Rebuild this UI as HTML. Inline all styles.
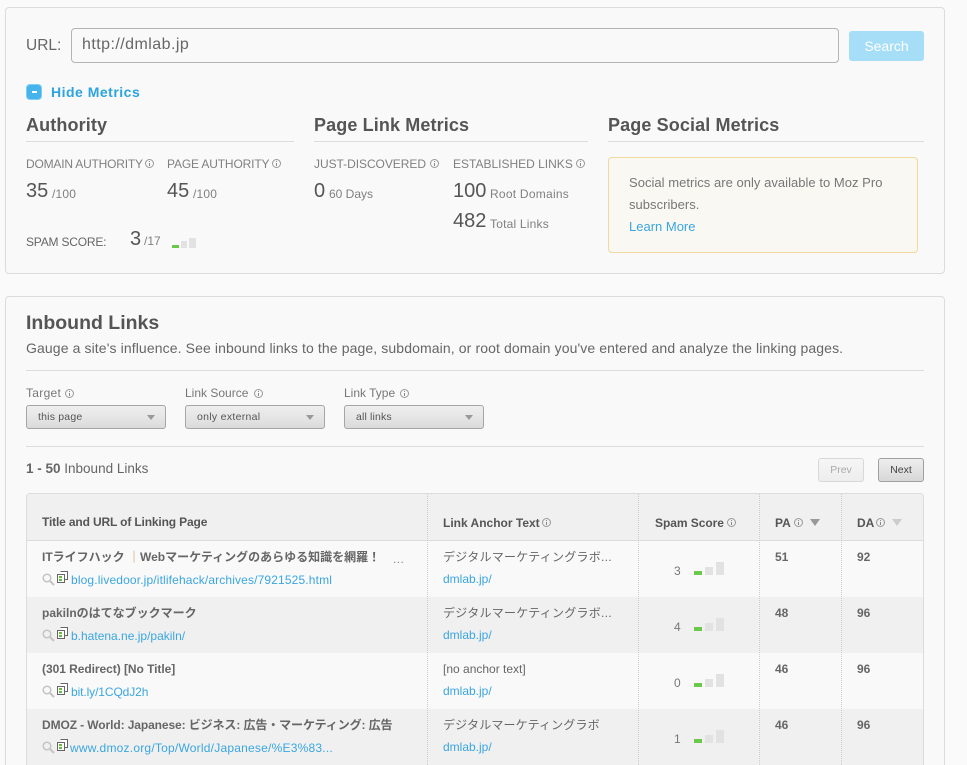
<!DOCTYPE html>
<html><head><meta charset="utf-8"><title>Open Site Explorer</title>
<style>
html,body{margin:0;padding:0;width:967px;height:765px;overflow:hidden;background:#fafafa}
body{position:relative;font-family:"Liberation Sans","Noto Sans CJK JP",sans-serif;color:#666}
.a,.t{position:absolute}
.t{white-space:nowrap;line-height:16px}
.panel{position:absolute;box-sizing:border-box;background:#f9f9f9;border:1px solid #dcdcdc;border-radius:4px}
.hr{position:absolute;height:1px;background:#dcdcdc}
h2{position:absolute;margin:0;font-size:18px;line-height:22px;font-weight:bold;color:#555;white-space:nowrap;letter-spacing:.12px}
.lab{font-size:12px;color:#808080}
.num{font-size:20px;color:#555;line-height:24px}
.sm{font-size:12px;color:#808080}
.link{color:#3aa6e0}
.sel{position:absolute;box-sizing:border-box;width:140px;height:24px;top:405px;border:1px solid #a6a6a6;border-radius:3px;background:linear-gradient(#eee,#e6e6e6 50%,#dadada);font-size:10.5px;letter-spacing:.3px;line-height:23px;padding-left:11px;color:#555}
.sel:after{content:"";position:absolute;right:10px;top:9px;border-left:4.5px solid transparent;border-right:4.5px solid transparent;border-top:5px solid #999}
.btn{position:absolute;box-sizing:border-box;top:458px;height:24px;border-radius:3px;font-size:10.5px;line-height:22px;text-align:center}
.th{font-size:12px;font-weight:bold;color:#555}
.title{font-size:12px;font-weight:bold;color:#666}
.url{font-size:12px;color:#3aa6e0;letter-spacing:.14px}
.anc{font-size:12px;color:#666}
.v{position:absolute;top:494px;width:0;height:271px;border-left:1px dotted #ccc}
.row{position:absolute;left:27px;width:896px;height:56px}
.num2{font-size:12px;font-weight:bold;color:#666}
.ar{position:absolute;border-left:5px solid transparent;border-right:5px solid transparent;border-top:7px solid #999}
svg{position:absolute;overflow:visible}
</style></head><body>

<div class="panel" style="left:5px;top:7px;width:940px;height:267px"></div>
<div class="t" style="left:26px;top:37px;font-size:15.5px;line-height:18px;color:#666">URL:</div>
<div class="a" style="left:71px;top:28px;width:768px;height:35px;box-sizing:border-box;border:1px solid #b4b4b4;border-radius:4px;background:#f9f9f9"></div>
<div class="t" style="left:82px;top:36px;font-size:16px;line-height:18px;letter-spacing:.45px;color:#666">http://dmlab.jp</div>
<div class="a" style="left:849px;top:31px;width:75px;height:30px;background:#a6def7;border-radius:3px;color:#fff;font-size:14px;line-height:30px;text-align:center">Search</div>

<div class="a" style="left:26px;top:84px;width:16px;height:16px;box-sizing:border-box;background:#45b4ea;border:1px solid #7fcdf2;border-radius:4px"></div>
<div class="a" style="left:32px;top:91px;width:5px;height:2px;background:#fff"></div>
<div class="t" style="left:51px;top:84px;font-size:14px;font-weight:bold;letter-spacing:.5px;color:#2ba4e0">Hide Metrics</div>

<h2 style="left:26px;top:114px">Authority</h2><div class="hr" style="left:26px;top:141px;width:268px"></div>
<h2 style="left:314px;top:114px">Page Link Metrics</h2><div class="hr" style="left:314px;top:141px;width:274px"></div>
<h2 style="left:608px;top:114px">Page Social Metrics</h2><div class="hr" style="left:608px;top:141px;width:316px"></div>

<div class="t lab" style="left:26px;top:156px;letter-spacing:-.2px">DOMAIN AUTHORITY</div>
<svg style="left:145px;top:159px" width="9" height="9"><circle cx="4.5" cy="4.5" r="4" fill="none" stroke="#999"/><path d="M4.5 2v1M4.5 4v3" stroke="#888"/></svg>
<div class="t lab" style="left:167px;top:156px;letter-spacing:-.15px">PAGE AUTHORITY</div>
<svg style="left:272px;top:159px" width="9" height="9"><circle cx="4.5" cy="4.5" r="4" fill="none" stroke="#999"/><path d="M4.5 2v1M4.5 4v3" stroke="#888"/></svg>
<div class="t num" style="left:26px;top:179px">35</div><div class="t sm" style="left:52px;top:186px;letter-spacing:.2px">/100</div>
<div class="t num" style="left:167px;top:179px">45</div><div class="t sm" style="left:193px;top:186px;letter-spacing:.2px">/100</div>
<div class="t lab" style="left:26px;top:234px;color:#666;letter-spacing:-.2px">SPAM SCORE:</div>
<div class="t num" style="left:130px;top:227px">3</div><div class="t sm" style="left:144px;top:233px">/17</div>
<div class="a" style="left:172px;top:245px;width:7px;height:3px;background:#6cc84a"></div>
<div class="a" style="left:181px;top:241px;width:6px;height:7px;background:#e2e2e2"></div>
<div class="a" style="left:189px;top:238px;width:7px;height:10px;background:#e2e2e2"></div>

<div class="t lab" style="left:314px;top:156px;letter-spacing:-.05px">JUST-DISCOVERED</div>
<svg style="left:430px;top:159px" width="9" height="9"><circle cx="4.5" cy="4.5" r="4" fill="none" stroke="#999"/><path d="M4.5 2v1M4.5 4v3" stroke="#888"/></svg>
<div class="t lab" style="left:453px;top:156px">ESTABLISHED LINKS</div>
<svg style="left:576px;top:159px" width="9" height="9"><circle cx="4.5" cy="4.5" r="4" fill="none" stroke="#999"/><path d="M4.5 2v1M4.5 4v3" stroke="#888"/></svg>
<div class="t num" style="left:314px;top:179px">0</div><div class="t sm" style="left:329px;top:186px">60 Days</div>
<div class="t num" style="left:453px;top:179px">100</div><div class="t sm" style="left:490px;top:186px;letter-spacing:.25px">Root Domains</div>
<div class="t num" style="left:453px;top:209px">482</div><div class="t sm" style="left:490px;top:216px;letter-spacing:.2px">Total Links</div>

<div class="a" style="left:608px;top:157px;width:310px;height:96px;box-sizing:border-box;background:#f9f8f2;border:1px solid #f1d99e;border-radius:4px"></div>
<div class="t" style="left:629px;top:175px;font-size:13px;letter-spacing:.03px;color:#777">Social metrics are only available to Moz Pro</div>
<div class="t" style="left:629px;top:197px;font-size:13px;letter-spacing:.03px;color:#777">subscribers.</div>
<div class="t link" style="left:629px;top:219px;font-size:13px">Learn More</div>

<div class="panel" style="left:5px;top:296px;width:940px;height:490px"></div>
<h2 style="left:26px;top:312px;font-size:19.5px;letter-spacing:0">Inbound Links</h2>
<div class="t" style="left:26px;top:340px;font-size:14px;letter-spacing:.11px;color:#666">Gauge a site's influence. See inbound links to the page, subdomain, or root domain you've entered and analyze the linking pages.</div>
<div class="hr" style="left:26px;top:370px;width:898px"></div>

<div class="t" style="left:26px;top:385px;font-size:12px;letter-spacing:.3px;color:#777">Target</div>
<svg style="left:65px;top:389px" width="9" height="9"><circle cx="4.5" cy="4.5" r="4" fill="none" stroke="#999"/><path d="M4.5 2v1M4.5 4v3" stroke="#888"/></svg>
<div class="t" style="left:185px;top:385px;font-size:12px;color:#777">Link Source</div>
<svg style="left:254px;top:389px" width="9" height="9"><circle cx="4.5" cy="4.5" r="4" fill="none" stroke="#999"/><path d="M4.5 2v1M4.5 4v3" stroke="#888"/></svg>
<div class="t" style="left:344px;top:385px;font-size:12px;color:#777">Link Type</div>
<svg style="left:400px;top:389px" width="9" height="9"><circle cx="4.5" cy="4.5" r="4" fill="none" stroke="#999"/><path d="M4.5 2v1M4.5 4v3" stroke="#888"/></svg>
<div class="sel" style="left:26px;letter-spacing:.2px">this page</div>
<div class="sel" style="left:185px">only external</div>
<div class="sel" style="left:344px;letter-spacing:.15px">all links</div>
<div class="hr" style="left:26px;top:446px;width:898px"></div>

<div class="t" style="left:26px;top:461px;font-size:13.5px;color:#666"><b>1 - 50</b> Inbound Links</div>
<div class="btn" style="left:818px;width:46px;border:1px solid #d8d8d8;background:linear-gradient(#f6f6f6,#ededed);color:#aaa">Prev</div>
<div class="btn" style="left:878px;width:46px;border:1px solid #a0a0a0;background:linear-gradient(#eee,#d8d8d8);color:#444">Next</div>

<div class="a" style="left:26px;top:493px;width:898px;height:290px;box-sizing:border-box;border:1px solid #dcdcdc;border-radius:4px 4px 0 0;background:#f9f9f9"></div>
<div class="a" style="left:27px;top:494px;width:896px;height:46px;background:#f0f0f0;border-radius:3px 3px 0 0"></div>
<div class="a" style="left:27px;top:540px;width:896px;height:1px;background:#dcdcdc"></div>
<div class="row" style="top:597px;background:#f0f0f0"></div>
<div class="row" style="top:709px;background:#f0f0f0"></div>
<div class="v" style="left:427px"></div><div class="v" style="left:638px"></div><div class="v" style="left:759px"></div><div class="v" style="left:841px"></div>

<div class="t th" style="left:42px;top:514px;letter-spacing:-.15px">Title and URL of Linking Page</div>
<div class="t th" style="left:443px;top:515px">Link Anchor Text</div>
<svg style="left:542px;top:518px" width="9" height="9"><circle cx="4.5" cy="4.5" r="4" fill="none" stroke="#999"/><path d="M4.5 2v1M4.5 4v3" stroke="#888"/></svg>
<div class="t th" style="left:655px;top:515px;letter-spacing:-.05px">Spam Score</div>
<svg style="left:727px;top:518px" width="9" height="9"><circle cx="4.5" cy="4.5" r="4" fill="none" stroke="#999"/><path d="M4.5 2v1M4.5 4v3" stroke="#888"/></svg>
<div class="t th" style="left:775px;top:515px">PA</div>
<svg style="left:794px;top:518px" width="9" height="9"><circle cx="4.5" cy="4.5" r="4" fill="none" stroke="#999"/><path d="M4.5 2v1M4.5 4v3" stroke="#888"/></svg>
<div class="ar" style="left:810px;top:519px"></div>
<div class="t th" style="left:857px;top:515px">DA</div>
<svg style="left:876px;top:518px" width="9" height="9"><circle cx="4.5" cy="4.5" r="4" fill="none" stroke="#999"/><path d="M4.5 2v1M4.5 4v3" stroke="#888"/></svg>
<div class="ar" style="left:892px;top:519px;border-top-color:#ccc"></div>

<!-- row 1 -->
<div class="t title" style="left:42px;top:549px">ITライフハック <span style="color:#c9975f">｜</span>Webマーケティングのあらゆる知識を網羅！</div>
<div class="t" style="left:393px;top:551px;font-size:12px;letter-spacing:.4px;color:#888">...</div>
<svg style="left:42px;top:573px" width="13" height="13"><circle cx="5" cy="5" r="3.8" fill="none" stroke="#c4c4c4" stroke-width="1.5"/><path d="M8 8l4 4" stroke="#c4c4c4" stroke-width="2"/></svg>
<svg style="left:57px;top:571px" width="11" height="12"><path d="M3.5 .5h7v8h-3M.5 3.5h7v8h-7z" fill="#fff" stroke="#666"/><rect x="2" y="5" width="3" height="2" fill="#6b4"/><rect x="2" y="8" width="3" height="2" fill="#6b4"/></svg>
<div class="t url" style="left:71px;top:572px">blog.livedoor.jp/itlifehack/archives/7921525.html</div>
<div class="t anc" style="left:443px;top:549px;letter-spacing:.25px">デジタルマーケティングラボ...</div>
<div class="t link" style="left:443px;top:571px;font-size:12px">dmlab.jp/</div>
<div class="t anc" style="left:674px;top:563px;color:#777">3</div>
<div class="a" style="left:694px;top:571px;width:8px;height:4px;background:#6cc84a"></div>
<div class="a" style="left:705px;top:567px;width:8px;height:8px;background:#e2e2e2"></div>
<div class="a" style="left:716px;top:562px;width:8px;height:13px;background:#e2e2e2"></div>
<div class="t num2" style="left:775px;top:549px">51</div><div class="t num2" style="left:857px;top:549px">92</div>

<!-- row 2 -->
<div class="t title" style="left:42px;top:605px">pakilnのはてなブックマーク</div>
<svg style="left:42px;top:629px" width="13" height="13"><circle cx="5" cy="5" r="3.8" fill="none" stroke="#c4c4c4" stroke-width="1.5"/><path d="M8 8l4 4" stroke="#c4c4c4" stroke-width="2"/></svg>
<svg style="left:57px;top:627px" width="11" height="12"><path d="M3.5 .5h7v8h-3M.5 3.5h7v8h-7z" fill="#fff" stroke="#666"/><rect x="2" y="5" width="3" height="2" fill="#6b4"/><rect x="2" y="8" width="3" height="2" fill="#6b4"/></svg>
<div class="t url" style="left:71px;top:628px;letter-spacing:0">b.hatena.ne.jp/pakiln/</div>
<div class="t anc" style="left:443px;top:605px;letter-spacing:.25px">デジタルマーケティングラボ...</div>
<div class="t link" style="left:443px;top:627px;font-size:12px">dmlab.jp/</div>
<div class="t anc" style="left:674px;top:619px;color:#777">4</div>
<div class="a" style="left:694px;top:627px;width:8px;height:4px;background:#6cc84a"></div>
<div class="a" style="left:705px;top:623px;width:8px;height:8px;background:#e2e2e2"></div>
<div class="a" style="left:716px;top:618px;width:8px;height:13px;background:#e2e2e2"></div>
<div class="t num2" style="left:775px;top:605px">48</div><div class="t num2" style="left:857px;top:605px">96</div>

<!-- row 3 -->
<div class="t title" style="left:42px;top:661px;letter-spacing:-.05px">(301 Redirect) [No Title]</div>
<svg style="left:42px;top:685px" width="13" height="13"><circle cx="5" cy="5" r="3.8" fill="none" stroke="#c4c4c4" stroke-width="1.5"/><path d="M8 8l4 4" stroke="#c4c4c4" stroke-width="2"/></svg>
<svg style="left:57px;top:683px" width="11" height="12"><path d="M3.5 .5h7v8h-3M.5 3.5h7v8h-7z" fill="#fff" stroke="#666"/><rect x="2" y="5" width="3" height="2" fill="#6b4"/><rect x="2" y="8" width="3" height="2" fill="#6b4"/></svg>
<div class="t url" style="left:71px;top:684px;letter-spacing:-.1px">bit.ly/1CQdJ2h</div>
<div class="t anc" style="left:443px;top:661px">[no anchor text]</div>
<div class="t link" style="left:443px;top:683px;font-size:12px">dmlab.jp/</div>
<div class="t anc" style="left:674px;top:675px;color:#777">0</div>
<div class="a" style="left:694px;top:683px;width:8px;height:4px;background:#6cc84a"></div>
<div class="a" style="left:705px;top:679px;width:8px;height:8px;background:#e2e2e2"></div>
<div class="a" style="left:716px;top:674px;width:8px;height:13px;background:#e2e2e2"></div>
<div class="t num2" style="left:775px;top:661px">46</div><div class="t num2" style="left:857px;top:661px">96</div>

<!-- row 4 -->
<div class="t title" style="left:42px;top:717px;letter-spacing:-.1px">DMOZ - World: Japanese: ビジネス: 広告・マーケティング: 広告</div>
<svg style="left:42px;top:741px" width="13" height="13"><circle cx="5" cy="5" r="3.8" fill="none" stroke="#c4c4c4" stroke-width="1.5"/><path d="M8 8l4 4" stroke="#c4c4c4" stroke-width="2"/></svg>
<svg style="left:57px;top:739px" width="11" height="12"><path d="M3.5 .5h7v8h-3M.5 3.5h7v8h-7z" fill="#fff" stroke="#666"/><rect x="2" y="5" width="3" height="2" fill="#6b4"/><rect x="2" y="8" width="3" height="2" fill="#6b4"/></svg>
<div class="t url" style="left:70px;top:740px;letter-spacing:.22px">www.dmoz.org/Top/World/Japanese/%E3%83...</div>
<div class="t anc" style="left:443px;top:717px;letter-spacing:.15px">デジタルマーケティングラボ</div>
<div class="t link" style="left:443px;top:739px;font-size:12px">dmlab.jp/</div>
<div class="t anc" style="left:674px;top:731px;color:#777">1</div>
<div class="a" style="left:694px;top:739px;width:8px;height:4px;background:#6cc84a"></div>
<div class="a" style="left:705px;top:735px;width:8px;height:8px;background:#e2e2e2"></div>
<div class="a" style="left:716px;top:730px;width:8px;height:13px;background:#e2e2e2"></div>
<div class="t num2" style="left:775px;top:717px">46</div><div class="t num2" style="left:857px;top:717px">96</div>

</body></html>
